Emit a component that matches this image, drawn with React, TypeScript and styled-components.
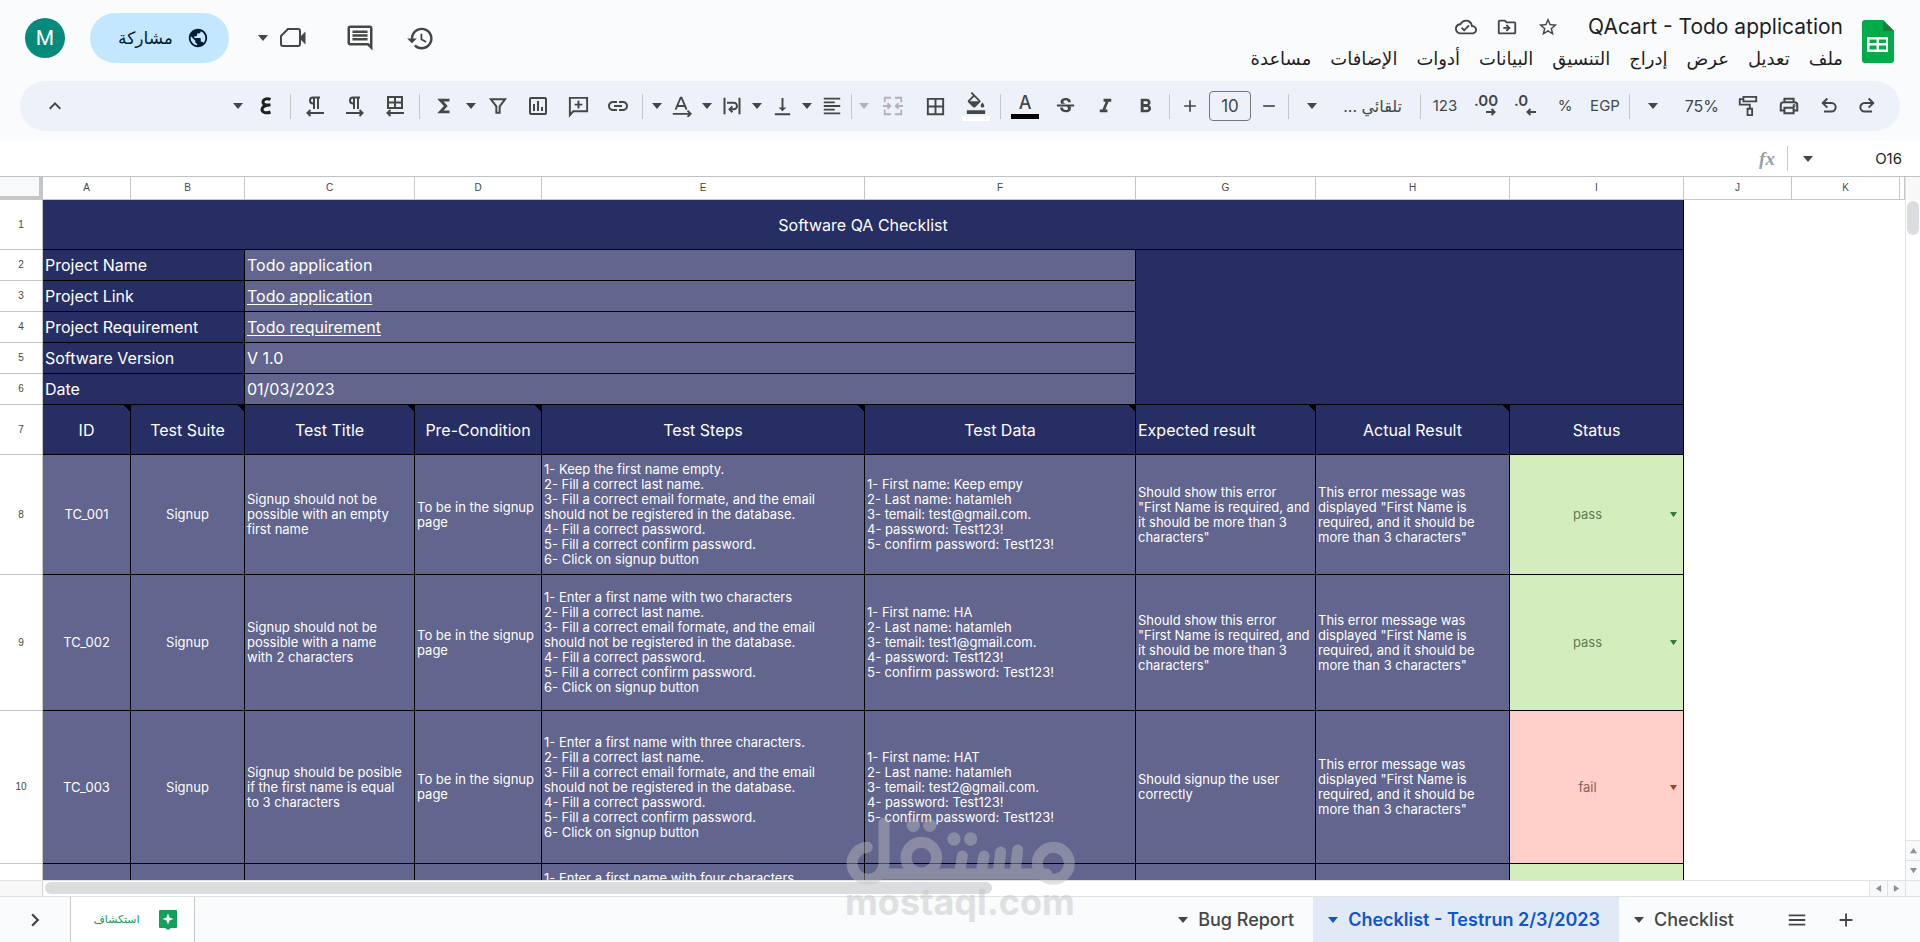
import React from "react";
import styled, { createGlobalStyle, css } from "styled-components";
import {
  MdAdd,
  MdBorderAll,
  MdExpandLess,
  MdChevronRight,
  MdFormatAlignLeft,
  MdFormatBold,
  MdFormatColorFill,
  MdFormatItalic,
  MdHistory,
  MdLink,
  MdMenu,
  MdOutlineCloudDone,
  MdOutlineDriveFileMove,
  MdOutlineInsertChart,
  MdOutlineInsertComment,
  MdPublic,
  MdRemove,
  MdStarBorder,
  MdStrikethroughS,
  MdVerticalAlignBottom,
} from "react-icons/md";

const ink = "#444746";
const uiFont = `Inter, "DejaVu Sans", sans-serif`;
const arabicFont = `"DejaVu Sans", sans-serif`;
const navy = "#272e63";
const slate = "#62658d";

const GlobalStyle = createGlobalStyle`
  *, *::before, *::after { box-sizing: border-box; }
  body { margin: 0; background: #fff; font-family: ${uiFont}; color: ${ink}; }
  button, input, select { font: inherit; color: inherit; margin: 0; padding: 0; border: 0; background: none; }
  select { appearance: none; cursor: pointer; }
  button { cursor: pointer; }
  svg { display: block; flex: none; }
`;

const Page = styled.div`
  position: relative;
  display: flex;
  flex-direction: column;
  height: 100vh;
  overflow: hidden;
`;

/* ---------- header ---------- */

const Header = styled.header`
  background: #f9fbfd;
  padding-bottom: 10px;
`;

const TitleBar = styled.div`
  display: flex;
  justify-content: space-between;
  height: 81px;
  padding: 0 26px 0 25px;
`;

const DocInfo = styled.div`
  display: flex;
  gap: 19px;
  padding-top: 12px;
`;

const LogoSlot = styled.div`
  padding-top: 8px;
`;

const DocLines = styled.div`
  display: flex;
  flex-direction: column;
`;

const TitleLine = styled.div`
  display: flex;
  align-items: center;
  height: 30px;
  gap: 19px;
`;

const DocTitle = styled.h1`
  margin: 0 0 0 10px;
  font: 400 21px/30px ${uiFont};
  color: #1f1f1f;
`;

const PlainButton = styled.button`
  display: flex;
  align-items: center;
  justify-content: center;
`;

const MenuRow = styled.nav`
  display: flex;
  align-items: center;
  gap: 19px;
  height: 34px;
`;

const MenuItem = styled.button`
  font: 400 18px/24px ${arabicFont};
  color: #1f1f1f;
`;

const Actions = styled.div`
  display: flex;
  align-items: center;
  height: 76px;
`;

const ActionButton = styled(PlainButton)`
  height: 40px;
  width: 61px;
`;

const VideoButton = styled(PlainButton)`
  height: 40px;
  gap: 12px;
  width: 95px;
`;

const ShareButton = styled(PlainButton)`
  width: 139px;
  height: 50px;
  gap: 14px;
  padding-left: 8px;
  border-radius: 25px;
  background: #c2e7ff;
  color: #001d35;
  font: 400 17px/24px ${arabicFont};
  margin: 0 5px 0 25px;
`;

const Avatar = styled(PlainButton)`
  width: 40px;
  height: 40px;
  border-radius: 50%;
  background: #058b7c;
  color: #fff;
  font: 400 21px/40px Roboto, sans-serif;
`;

/* ---------- toolbar ---------- */

const Toolbar = styled.div`
  display: flex;
  align-items: center;
  height: 50px;
  margin: 0 20px;
  padding: 0 14px 0 15px;
  border-radius: 25px;
  background: #edf2fa;
`;

const Tool = styled(PlainButton)<{ $w?: number; $muted?: boolean }>`
  flex: none;
  width: ${(p) => p.$w ?? 40}px;
  height: 36px;
  font: 400 15px/20px ${uiFont};
  color: ${(p) => (p.$muted ? "#b5aebb" : ink)};
`;

const Divider = styled.span<{ $gap?: number }>`
  flex: none;
  width: 1px;
  height: 25px;
  margin: 0 ${(p) => p.$gap ?? 4}px;
  background: #c7c7c7;
`;

const Spacer = styled.span`
  flex: 1;
`;

const Picker = styled.label<{ $w: number; $inset: number }>`
  position: relative;
  flex: none;
  width: ${(p) => p.$w}px;
  svg {
    position: absolute;
    left: 14px;
    top: 50%;
    margin-top: -3px;
    pointer-events: none;
  }
  select {
    width: 100%;
    height: 36px;
    padding: 0 ${(p) => p.$inset}px 0 24px;
    font: 400 16px/24px ${uiFont};
    color: ${ink};
  }
`;

const SizeInput = styled.input`
  && {
    flex: none;
    width: 42px;
    height: 30px;
    margin: 0 3px;
    border: 1px solid #747775;
    border-radius: 4px;
    text-align: center;
    font: 400 17px/24px ${uiFont};
  }
`;

const Swatch = styled.span<{ $c: string }>`
  width: 28px;
  height: 5px;
  background: ${(p) => p.$c};
`;

const Stacked = styled(Tool)`
  flex-direction: column;
  gap: 2px;
`;

const TextA = styled.span`
  font: 500 18px/18px ${uiFont};
`;

const DecimalBox = styled.span`
  display: flex;
  flex-direction: column;
  width: 22px;
  padding-bottom: 2px;
  svg { align-self: flex-end; }
`;

const Decimal = styled.span`
  font: 600 15px/14px ${uiFont};
  text-align: left;
`;

/* ---------- formula bar ---------- */

const FormulaBar = styled.div`
  display: flex;
  align-items: center;
  height: 35px;
  padding-right: 4px;
`;

const NameBox = styled.input`
  && {
    width: 94px;
    padding: 0 14px;
    font: 400 15px/20px ${uiFont};
    color: #1f1f1f;
    direction: ltr;
    text-align: right;
  }
`;

const FormulaInput = styled.input`
  flex: 1;
  height: 24px;
`;

const Fx = styled.i`
  width: 28px;
  font: italic 700 19px/24px "Liberation Serif", serif;
  color: #9aa0a6;
  text-align: center;
`;

/* ---------- sheet ---------- */

const SheetArea = styled.main`
  flex: 1;
  min-height: 0;
  display: grid;
  grid-template-columns: minmax(0, 1fr) 15px;
  border-top: 1px solid #c0c3c6;
`;

const GridView = styled.div`
  overflow: hidden;
`;

const Table = styled.table`
  width: 100%;
  table-layout: fixed;
  border-collapse: separate;
  border-spacing: 0;
  td, th {
    padding: 0 2px;
    font-weight: 400;
    overflow: hidden;
  }
`;

const Row = styled.tr<{ $h: number }>`
  height: ${(p) => p.$h}px;
`;

const Corner = styled.td`
  background: #f8f9fa;
  border-right: 4px solid #c4c7c5;
  border-bottom: 4px solid #c4c7c5;
`;

const ColHead = styled.th`
  border-right: 1px solid #c4c7c5;
  border-bottom: 1px solid #c4c7c5;
  font: 400 10px/14px "Liberation Sans", sans-serif;
  text-align: center;
`;

const RowHead = styled(ColHead)`
  width: 43px;
`;

const Cell = styled.td<{ $dark?: boolean; $center?: boolean; $big?: boolean; $top?: boolean; $note?: boolean }>`
  background: ${(p) => (p.$dark ? navy : slate)};
  border-right: 1px solid #000;
  border-bottom: 1px solid #000;
  color: #fff;
  font-family: ${uiFont};
  font-size: ${(p) => (p.$big ? 16 : 13)}px;
  line-height: ${(p) => (p.$big ? 20 : 15)}px;
  text-align: ${(p) => (p.$center ? "center" : "left")};
  white-space: pre;
  ${(p) =>
    p.$top &&
    css`
      vertical-align: top;
      padding-top: 7px !important;
    `}
  ${(p) =>
    p.$note &&
    css`
      background: linear-gradient(to top right, transparent 50%, #000 50%) top right / 6px 7px no-repeat ${navy};
    `}
`;

const CellLink = styled.a`
  color: inherit;
  text-underline-offset: 2px;
`;

const StatusCell = styled.td<{ $fail?: boolean }>`
  background: ${(p) => (p.$fail ? "#ffcfc9" : "#d4edbc")};
  border-right: 1px solid #000;
  border-bottom: 1px solid #000;
`;

const StatusPicker = styled.label<{ $fail?: boolean }>`
  display: flex;
  align-items: center;
  padding-right: 4px;
  color: ${(p) => (p.$fail ? "#b13a22" : "#2f7d3b")};
  select {
    flex: 1;
    padding-right: 7px;
    font: 400 13px/15px ${uiFont};
    color: ${(p) => (p.$fail ? "#8f5c58" : "#5f7c56")};
    text-align: center;
    text-align-last: center;
  }
`;

const VScroll = styled.div`
  display: flex;
  flex-direction: column;
  border-left: 1px solid #e1e3e1;
`;

const VHead = styled.div`
  height: 23px;
  background: #f8f8f8;
`;

const VTrack = styled.div`
  flex: 1;
  padding: 1px;
`;

const VThumb = styled.div`
  height: 34px;
  border-radius: 7px;
  background: #dadce0;
`;

const ScrollButton = styled(PlainButton)`
  && {
    height: 20px;
    border-top: 1px solid #e1e3e1;
    background: #f8f9fa;
    color: #8d9095;
  }
`;

const HScroll = styled.div`
  display: flex;
  height: 16px;
  border-top: 1px solid #e1e3e1;
`;

const HCorner = styled.div`
  width: 43px;
  background: #f8f8f8;
  border-right: 1px solid #d0d3d6;
`;

const HTrack = styled.div`
  flex: 1;
  padding: 1px 2px;
`;

const HThumb = styled.div`
  width: 52%;
  height: 12px;
  border-radius: 6px;
  background: #dadce0;
`;

const HButton = styled(PlainButton)`
  && {
    width: 18px;
    border-left: 1px solid #e1e3e1;
    background: #f8f9fa;
    color: #8d9095;
  }
`;

const HEnd = styled.div`
  width: 15px;
  border-left: 1px solid #e1e3e1;
  background: #f8f9fa;
`;

/* ---------- bottom bar ---------- */

const BottomBar = styled.footer`
  display: flex;
  align-items: stretch;
  height: 46px;
  border-top: 1px solid #e1e3e1;
  background: #f9fbfd;
`;

const BarIcon = styled(PlainButton)`
  width: 49px;
`;

const TabStrip = styled.div`
  display: flex;
  flex: 1;
  padding-right: 50px;
`;

const SheetTabs = styled.div`
  display: flex;
  padding-right: 19px;
`;

const SheetTab = styled.button<{ $active?: boolean }>`
  display: flex;
  align-items: center;
  gap: 10px;
  padding: 0 19px 0 15px;
  font: ${(p) => (p.$active ? 600 : 500)} 18px/24px ${uiFont};
  color: ${(p) => (p.$active ? "#1155cc" : ink)};
  background: ${(p) => (p.$active ? "#e1e9f7" : "transparent")};
`;

const ExploreTab = styled(PlainButton)`
  && {
    width: 125px;
    gap: 19px;
    padding-left: 5px;
    background: #fff;
    border-left: 1px solid #c4c7c5;
    border-right: 1px solid #c4c7c5;
    color: #14a05a;
    font: 400 11px/16px ${arabicFont};
  }
`;

const NextButton = styled(PlainButton)`
  width: 70px;
`;

/* ---------- watermark ---------- */

const Watermark = styled.div`
  position: absolute;
  left: 50%;
  bottom: 19px;
  width: 234px;
  margin-left: -117px;
  display: flex;
  flex-direction: column;
  align-items: center;
  color: #bebebe;
  opacity: 0.43;
  pointer-events: none;
`;

const WatermarkText = styled.span`
  font: 700 36px/42px ${uiFont};
  margin-top: -5px;
`;

/* ---------- drawings ---------- */

const Caret = () => (
  <svg width="10" height="6" viewBox="0 0 10 6">
    <path d="M0 0h10L5 6z" fill="currentColor" />
  </svg>
);

const SmallCaret = ({ turn = 0 }: { turn?: number }) => (
  <svg width="7" height="7" viewBox="0 0 8 8">
    <path d="M0 1h8L4 7z" fill="currentColor" transform={`rotate(${turn} 4 4)`} />
  </svg>
);

const Line = ({ size = 24, w = 2, children }: { size?: number; w?: number; children: React.ReactNode }) => (
  <svg width={size} height={size} viewBox="0 0 24 24" fill="none" stroke="currentColor" strokeWidth={w}>
    {children}
  </svg>
);

const SheetsLogo = () => (
  <svg width="32" height="43" viewBox="0 0 32 43">
    <path d="M3 0h18l11 11v29a3 3 0 0 1-3 3H3a3 3 0 0 1-3-3V3a3 3 0 0 1 3-3z" fill="#00ac47" />
    <path d="M21 0l11 11H21z" fill="#188038" />
    <path d="M5 17h21v15H5zM7.500 19.500v3.500h7v-3.500zM17 19.500v3.500h7v-3.500zM7.500 25.500V29.500h7v-4zM17 25.500V29.500h7v-4z" fill="#fff" fillRule="evenodd" />
  </svg>
);

const VideoIcon = () => (
  <svg width="26" height="22" viewBox="0 0 26 22">
    <path d="M8 2h10a2 2 0 0 1 2 2v13a2 2 0 0 1-2 2H3a2 2 0 0 1-2-2V9z" fill="none" stroke="currentColor" strokeWidth="2" />
    <path d="M20 10l5.500-5.500v13L20 12z" fill="currentColor" />
  </svg>
);

const RedoIcon = () => (
  <Line size={20} w={2.4}>
    <path d="M14 3l5.500 5.500L14 14M19 8.500H9a5 5 0 0 0 0 10h9" />
  </Line>
);
const UndoIcon = () => (
  <Line size={20} w={2.4}>
    <path d="M10 3L4.500 8.500L10 14M5 8.500h10a5 5 0 0 1 0 10H6" />
  </Line>
);
const PrintIcon = () => (
  <Line size={22} w={2.2}>
    <path d="M7 8V4h10v4M7 17H3v-6a3 3 0 0 1 3-3h12a3 3 0 0 1 3 3v6h-4M7 14h10v6H7z" />
    <circle cx="17.500" cy="11.500" r="0.600" />
  </Line>
);
const RollerIcon = () => (
  <Line size={22}>
    <path d="M7 2h14v5H7zM7 4.500H3v6h11V15M11.500 15h5v7h-5z" />
  </Line>
);
const FilterIcon = () => (
  <Line size={20} w={2.4}>
    <path d="M3.500 4h17L14 12.500V20h-4v-7.500z" />
  </Line>
);
const CommentPlusIcon = () => (
  <Line size={23}>
    <path d="M3 21V3h18v14H6.500zM12 6v8M8 10h8" />
  </Line>
);
const RotateIcon = () => (
  <Line size={22}>
    <path d="M5 16l5.500-13h1L17 16M7 12h8M2 20.500h19M18 17l3.500 3.500L18 24" />
  </Line>
);
const WrapIcon = () => (
  <Line size={20} w={2.4}>
    <path d="M3 2v20M21 2v20M6 8h8a4 4 0 0 1 0 8h-4M12.500 12.500L9 16l3.500 3.500" />
  </Line>
);
const MergeIcon = () => (
  <Line size={22}>
    <path d="M10 3H3v5M14 3h7v5M3 16v5h7M21 16v5h-7M1 12h8M6 9l3 3-3 3M23 12h-8M18 9l-3 3 3 3" />
  </Line>
);
const SigmaIcon = () => (
  <Line size={22} w={3}>
    <path d="M18 5.500H8l6 6.500-6 6.500h10" />
  </Line>
);
const ArabicInputIcon = () => (
  <svg width="12" height="18" viewBox="0 0 12 18" fill="none" stroke="#1f1f1f" strokeWidth="3">
    <path d="M10.500 2.500C7 0.800 3 2.200 3 5c0 2.600 3 3.400 7.500 2.800M10 8C5 8.300 2 10 2 12.600c0 3.200 4.500 4 8.500 2.400" />
  </svg>
);
const ArrowUnder = ({ left }: { left?: boolean }) => (
  <svg width="10" height="8" viewBox="0 0 10 8" fill="none" stroke="currentColor" strokeWidth="2">
    {left ? <path d="M10 4H1.500M4.500 1l-3 3 3 3" /> : <path d="M0 4h8.500M5.500 1l3 3-3 3" />}
  </svg>
);
const ParagraphIcon = ({ left }: { left?: boolean }) => (
  <svg width="18" height="21" viewBox="0 0 18 21" fill="none" stroke="currentColor" strokeWidth="2">
    <path d="M14 1.500H7a3 3 0 0 0 0 6h1M8 1.500V13M12 1.500V13" />
    {left ? <path d="M18 17H1.500M4.500 14L1.500 17l3 3" /> : <path d="M0 17h16.500M13.500 14l3 3-3 3" />}
  </svg>
);
const TableDirIcon = () => (
  <svg width="18" height="22" viewBox="0 0 18 22" fill="none" stroke="currentColor" strokeWidth="2">
    <path d="M2 2h14v11H2zM9 2v11M2 7.500h14M18 18H1.500M4.500 15l-3 3 3 3" />
  </svg>
);
const ExploreIcon = () => (
  <svg width="18" height="20" viewBox="0 0 18 20">
    <path d="M1 0h16a1 1 0 0 1 1 1v16a1 1 0 0 1-1 1h-5l-3 2-3-2H1a1 1 0 0 1-1-1V1a1 1 0 0 1 1-1z" fill="#14a05a" />
    <path d="M9 3.500l1.500 4L14.500 9l-4 1.500-1.500 4-1.500-4-4-1.500 4-1.500z" fill="#fff" />
  </svg>
);
const WatermarkLogo = () => (
  <svg width="234" height="70" viewBox="189 105 702 210" fill="none" stroke="currentColor" strokeWidth="33" strokeLinecap="round">
    <circle cx="820" cy="247" r="48" />
    <circle cx="424" cy="230" r="46" />
    <path d="M262 199A48 48 0 1 0 312 247V126M312 279H800" />
    <path d="M713 207L706 270M662 213L655 270M612 225L604 270M547 225L540 270" />
    <g fill="currentColor" stroke="none">
      <circle cx="400" cy="133" r="20" />
      <circle cx="449" cy="133" r="20" />
      <circle cx="522" cy="174" r="20" />
      <circle cx="572" cy="174" r="20" />
    </g>
  </svg>
);

/* ---------- data ---------- */

const menus = ["ملف", "تعديل", "عرض", "إدراج", "التنسيق", "البيانات", "أدوات", "الإضافات", "مساعدة"];

const columns: [string, number][] = [
  ["A", 88],
  ["B", 114],
  ["C", 170],
  ["D", 127],
  ["E", 323],
  ["F", 271],
  ["G", 180],
  ["H", 194],
  ["I", 174],
  ["J", 108],
  ["K", 108],
];

const details = [
  { label: "Project Name", value: "Todo application" },
  { label: "Project Link", value: "Todo application", link: true },
  { label: "Project Requirement", value: "Todo requirement", link: true },
  { label: "Software Version", value: "V 1.0" },
  { label: "Date", value: "01/03/2023" },
];

const headings = ["ID", "Test Suite", "Test Title", "Pre-Condition", "Test Steps", "Test Data", "Expected result", "Actual Result", "Status"];

const steps = (first: string) =>
  `1- ${first}
2- Fill a correct last name.
3- Fill a correct email formate, and the email
should not be registered in the database.
4- Fill a correct password.
5- Fill a correct confirm password.
6- Click on signup button`;

const testData = (name: string, mail: string) =>
  `1- First name: ${name}
2- Last name: hatamleh
3- temail: ${mail}@gmail.com.
4- password: Test123!
5- confirm password: Test123!`;

const required = `Should show this error
"First Name is required, and
it should be more than 3
characters"`;

const actual = `This error message was
displayed "First Name is
required, and it should be
more than 3 characters"`;

const cases = [
  {
    id: "TC_001",
    height: 120,
    title: "Signup should not be\npossible with an empty\nfirst name",
    steps: steps("Keep the first name empty."),
    data: testData("Keep empy", "test"),
    expected: required,
    status: "pass",
  },
  {
    id: "TC_002",
    height: 136,
    title: "Signup should not be\npossible with a name\nwith 2 characters",
    steps: steps("Enter a first name with two characters"),
    data: testData("HA", "test1"),
    expected: required,
    status: "pass",
  },
  {
    id: "TC_003",
    height: 153,
    title: "Signup should be posible\nif the first name is equal\nto 3 characters",
    steps: steps("Enter a first name with three characters."),
    data: testData("HAT", "test2"),
    expected: "Should signup the user\ncorrectly",
    status: "fail",
  },
];

/* ---------- sections ---------- */

const TopBar = () => (
  <TitleBar dir="rtl">
    <DocInfo>
      <LogoSlot>
        <SheetsLogo />
      </LogoSlot>
      <DocLines>
        <TitleLine>
          <DocTitle dir="ltr">QAcart - Todo application</DocTitle>
          <PlainButton aria-label="star"><MdStarBorder size={22} /></PlainButton>
          <PlainButton aria-label="move"><MdOutlineDriveFileMove size={22} /></PlainButton>
          <PlainButton aria-label="saved"><MdOutlineCloudDone size={22} /></PlainButton>
        </TitleLine>
        <MenuRow>
          {menus.map((m) => (
            <MenuItem key={m}>{m}</MenuItem>
          ))}
        </MenuRow>
      </DocLines>
    </DocInfo>
    <Actions>
      <ActionButton aria-label="history"><MdHistory size={29} /></ActionButton>
      <ActionButton aria-label="comments"><MdOutlineInsertComment size={30} /></ActionButton>
      <VideoButton aria-label="meet"><VideoIcon /><Caret /></VideoButton>
      <ShareButton><MdPublic size={22} />مشاركة</ShareButton>
      <Avatar aria-label="account">M</Avatar>
    </Actions>
  </TitleBar>
);

const ToolRow = () => (
  <Toolbar dir="rtl" role="toolbar">
    <Tool $w={38} aria-label="redo"><RedoIcon /></Tool>
    <Tool $w={38} aria-label="undo"><UndoIcon /></Tool>
    <Tool $w={42} aria-label="print"><PrintIcon /></Tool>
    <Tool aria-label="paint format"><RollerIcon /></Tool>
    <Picker $w={94} $inset={9}>
      <select aria-label="zoom" defaultValue="75%"><option>75%</option></select>
      <Caret />
    </Picker>
    <Divider />
    <Tool>EGP</Tool>
    <Tool>%</Tool>
    <Tool aria-label="fewer decimals">
      <DecimalBox dir="ltr"><Decimal>.0</Decimal><ArrowUnder left /></DecimalBox>
    </Tool>
    <Tool aria-label="more decimals">
      <DecimalBox dir="ltr"><Decimal>.00</Decimal><ArrowUnder /></DecimalBox>
    </Tool>
    <Tool>123</Tool>
    <Divider />
    <Picker $w={123} $inset={14}>
      <select aria-label="font" defaultValue="auto"><option value="auto">تلقائي ...</option></select>
      <Caret />
    </Picker>
    <Divider />
    <Tool $w={30} aria-label="smaller"><MdRemove size={20} /></Tool>
    <SizeInput aria-label="font size" defaultValue="10" />
    <Tool $w={32} aria-label="larger"><MdAdd size={20} /></Tool>
    <Divider />
    <Tool aria-label="bold"><MdFormatBold size={23} /></Tool>
    <Tool aria-label="italic"><MdFormatItalic size={23} /></Tool>
    <Tool aria-label="strikethrough"><MdStrikethroughS size={23} /></Tool>
    <Stacked aria-label="text colour"><TextA>A</TextA><Swatch $c="#000" /></Stacked>
    <Divider />
    <Stacked aria-label="fill colour"><MdFormatColorFill size={22} /><Swatch $c="#fff" /></Stacked>
    <Tool $w={42} aria-label="borders"><MdBorderAll size={23} /></Tool>
    <Tool $w={42} $muted aria-label="merge"><MergeIcon /></Tool>
    <Tool $w={16} $muted aria-label="merge options"><Caret /></Tool>
    <Divider />
    <Tool $w={30} aria-label="align"><MdFormatAlignLeft size={22} /></Tool>
    <Tool $w={20} aria-label="align options"><Caret /></Tool>
    <Tool $w={30} aria-label="vertical align"><MdVerticalAlignBottom size={23} /></Tool>
    <Tool $w={20} aria-label="vertical align options"><Caret /></Tool>
    <Tool $w={30} aria-label="wrap"><WrapIcon /></Tool>
    <Tool $w={20} aria-label="wrap options"><Caret /></Tool>
    <Tool $w={30} aria-label="rotate"><RotateIcon /></Tool>
    <Tool $w={20} aria-label="rotate options"><Caret /></Tool>
    <Divider />
    <Tool aria-label="link"><MdLink size={24} /></Tool>
    <Tool aria-label="comment"><CommentPlusIcon /></Tool>
    <Tool aria-label="chart"><MdOutlineInsertChart size={24} /></Tool>
    <Tool aria-label="filter"><FilterIcon /></Tool>
    <Tool $w={14} aria-label="filter options"><Caret /></Tool>
    <Tool aria-label="functions"><SigmaIcon /></Tool>
    <Divider />
    <Tool aria-label="sheet direction"><TableDirIcon /></Tool>
    <Tool aria-label="left to right"><ParagraphIcon /></Tool>
    <Tool aria-label="right to left"><ParagraphIcon left /></Tool>
    <Divider />
    <Tool aria-label="input tools"><ArabicInputIcon /></Tool>
    <Tool $w={16} aria-label="input tools options"><Caret /></Tool>
    <Spacer />
    <Tool aria-label="collapse"><MdExpandLess size={24} /></Tool>
  </Toolbar>
);

const Sheet = () => (
  <GridView>
    <Table dir="ltr">
      <colgroup>
        <col width={43} />
        {columns.map(([name, w]) => (
          <col key={name} width={w} />
        ))}
        <col />
      </colgroup>
      <thead>
        <Row $h={23}>
          <Corner />
          {columns.map(([name]) => (
            <ColHead key={name} scope="col">{name}</ColHead>
          ))}
          <ColHead />
        </Row>
      </thead>
      <tbody>
        <Row $h={50}>
          <RowHead scope="row">1</RowHead>
          <Cell $dark $center $big colSpan={9}>Software QA Checklist</Cell>
        </Row>
        {details.map((d, i) => (
          <Row $h={31} key={d.label}>
            <RowHead scope="row">{i + 2}</RowHead>
            <Cell $dark $big colSpan={2}>{d.label}</Cell>
            <Cell $big colSpan={4}>{d.link ? <CellLink href="#">{d.value}</CellLink> : d.value}</Cell>
            {i === 0 && <Cell $dark colSpan={3} rowSpan={5} />}
          </Row>
        ))}
        <Row $h={50}>
          <RowHead scope="row">7</RowHead>
          {headings.map((h) => (
            <Cell key={h} $dark $big $center={h !== "Expected result"} $note={h !== "Status"}>{h}</Cell>
          ))}
        </Row>
        {cases.map((c, i) => (
          <Row $h={c.height} key={c.id}>
            <RowHead scope="row">{i + 8}</RowHead>
            <Cell $center>{c.id}</Cell>
            <Cell $center>Signup</Cell>
            <Cell>{c.title}</Cell>
            <Cell>{"To be in the signup\npage"}</Cell>
            <Cell>{c.steps}</Cell>
            <Cell>{c.data}</Cell>
            <Cell>{c.expected}</Cell>
            <Cell>{actual}</Cell>
            <StatusCell $fail={c.status === "fail"}>
              <StatusPicker $fail={c.status === "fail"}>
                <select aria-label={`${c.id} status`} defaultValue={c.status}>
                  <option>{c.status}</option>
                </select>
                <SmallCaret />
              </StatusPicker>
            </StatusCell>
          </Row>
        ))}
        <Row $h={120}>
          <RowHead scope="row" />
          <Cell />
          <Cell />
          <Cell />
          <Cell />
          <Cell $top>1- Enter a first name with four characters</Cell>
          <Cell />
          <Cell />
          <Cell />
          <StatusCell />
        </Row>
      </tbody>
    </Table>
  </GridView>
);

export default function App() {
  return (
    <Page>
      <GlobalStyle />
      <Header>
        <TopBar />
        <ToolRow />
      </Header>
      <FormulaBar dir="rtl">
        <NameBox aria-label="name box" defaultValue="O16" />
        <Tool $w={28} aria-label="named ranges"><Caret /></Tool>
        <Divider $gap={6} />
        <Fx dir="ltr">fx</Fx>
        <FormulaInput aria-label="formula" />
      </FormulaBar>
      <SheetArea>
        <Sheet />
        <VScroll>
          <VHead />
          <VTrack><VThumb /></VTrack>
          <ScrollButton aria-label="scroll up"><SmallCaret turn={180} /></ScrollButton>
          <ScrollButton aria-label="scroll down"><SmallCaret /></ScrollButton>
        </VScroll>
      </SheetArea>
      <HScroll>
        <HCorner />
        <HTrack><HThumb /></HTrack>
        <HButton aria-label="scroll left"><SmallCaret turn={90} /></HButton>
        <HButton aria-label="scroll right"><SmallCaret turn={-90} /></HButton>
        <HEnd />
      </HScroll>
      <BottomBar dir="rtl">
        <TabStrip>
          <BarIcon aria-label="add sheet"><MdAdd size={22} /></BarIcon>
          <BarIcon aria-label="all sheets"><MdMenu size={22} /></BarIcon>
          <SheetTabs>
            <SheetTab><bdi>Checklist</bdi><Caret /></SheetTab>
            <SheetTab $active><bdi>Checklist - Testrun 2/3/2023</bdi><Caret /></SheetTab>
            <SheetTab><bdi>Bug Report</bdi><Caret /></SheetTab>
          </SheetTabs>
        </TabStrip>
        <ExploreTab><ExploreIcon />استكشاف</ExploreTab>
        <NextButton aria-label="next"><MdChevronRight size={26} /></NextButton>
      </BottomBar>
      <Watermark>
        <WatermarkLogo />
        <WatermarkText>mostaql.com</WatermarkText>
      </Watermark>
    </Page>
  );
}
